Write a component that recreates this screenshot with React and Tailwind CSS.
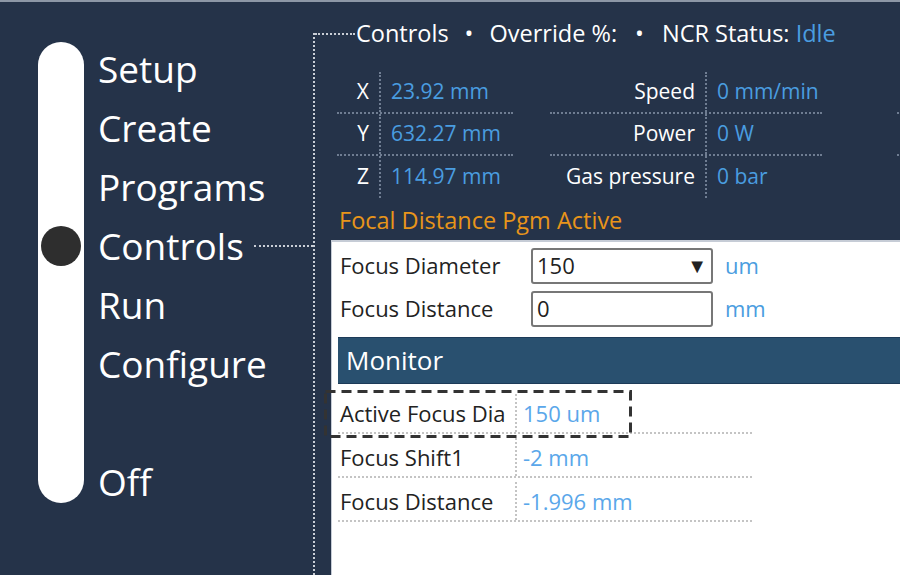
const navItems = ["Setup", "Create", "Programs", "Controls", "Run", "Configure", "", "Off"];

const axisRows = [
  { label: "X", value: "23.92 mm" },
  { label: "Y", value: "632.27 mm" },
  { label: "Z", value: "114.97 mm" },
];

const machineRows = [
  { label: "Speed", value: "0 mm/min" },
  { label: "Power", value: "0 W" },
  { label: "Gas pressure", value: "0 bar" },
];

const monitorRows = [
  { label: "Active Focus Dia", value: "150 um" },
  { label: "Focus Shift1", value: "-2 mm" },
  { label: "Focus Distance", value: "-1.996 mm" },
];

function StatTable({ rows, labelWidth, width }) {
  return (
    <div className="flex flex-col" style={{ width }}>
      {rows.map((row, i) => (
        <div
          key={row.label}
          className={
            "flex h-[42px] items-center " +
            (i < rows.length - 1 ? "border-b-2 border-dotted border-[#6f7d92]" : "")
          }
        >
          <div
            className="flex h-full items-center justify-end border-r-2 border-dotted border-[#6f7d92] pr-[10px] text-white"
            style={{ width: labelWidth }}
          >
            {row.label}
          </div>
          <div className="pl-[10px] text-[#4a9de0]">{row.value}</div>
        </div>
      ))}
    </div>
  );
}

export default function App() {
  return (
    <div
      className="flex h-[575px] w-[900px] overflow-hidden border-t-2 border-[#8d97a6] bg-[#253349]"
      style={{ fontFamily: '"Open Sans", "Noto Sans", sans-serif' }}
    >
      {/* sidebar */}
      <div className="flex w-[313px] shrink-0">
        <div className="ml-[38px] mt-[40px] flex h-[461px] w-[46px] shrink-0 flex-col items-center rounded-full bg-white pt-[184px]">
          <div className="h-[40px] w-[40px] rounded-full bg-[#2e2e2e]" />
        </div>
        <div className="ml-[14px] mt-[37px] flex flex-1 flex-col">
          {navItems.map((item, i) => (
            <div key={i} className="flex h-[59px] items-center">
              <span className="text-[37px] leading-none text-white">{item}</span>
              {item === "Controls" && (
                <div className="ml-[10px] h-0 flex-1 border-t-2 border-dotted border-[#c9ced6]" />
              )}
            </div>
          ))}
        </div>
      </div>

      {/* main */}
      <div className="mt-[31px] flex flex-1 flex-col border-l-2 border-dotted border-[#c9ced6]">
        <div className="-mt-[13px] flex h-[28px] items-center text-[23.5px] text-white">
          <div className="mr-[1px] h-0 w-[40px] border-t-2 border-dotted border-[#c9ced6]" />
          <span>Controls</span>
          <span className="mx-[16px]">•</span>
          <span>Override %:</span>
          <span className="mx-[18px]">•</span>
          <span>
            NCR Status: <span className="text-[#4a9de0]">Idle</span>
          </span>
        </div>

        <div className="ml-[22px] mt-[24px] flex text-[21px]">
          <StatTable rows={axisRows} labelWidth={44} width={176} />
          <div className="ml-[37px]">
            <StatTable rows={machineRows} labelWidth={157} width={272} />
          </div>
          <div className="ml-[75px] flex flex-col">
            <div className="h-[42px] w-[40px] border-b-2 border-dotted border-[#6f7d92]" />
            <div className="h-[42px] w-[40px] border-b-2 border-dotted border-[#6f7d92]" />
          </div>
        </div>

        <div className="ml-[24px] mt-[6px] text-[23.5px] leading-[32px] text-[#e8951a]">
          Focal Distance Pgm Active
        </div>

        <div className="ml-[16px] mt-[4px] flex flex-1 flex-col border-l border-t-2 border-[#c6ccd6] bg-white pl-[6px] pt-[2px] text-[22px] text-[#222]">
          <div className="flex h-[43px] items-center">
            <div className="w-[193px] pl-[2px]">Focus Diameter</div>
            <div className="flex h-[36px] w-[182px] items-center justify-between rounded-[3px] border-2 border-[#777] px-[4px]">
              <span>150</span>
              <span className="text-[20px]">▼</span>
            </div>
            <span className="ml-[12px] text-[#4a9de0]">um</span>
          </div>
          <div className="flex h-[43px] items-center">
            <div className="w-[193px] pl-[2px]">Focus Distance</div>
            <div className="flex h-[36px] w-[182px] items-center rounded-[3px] border-2 border-[#777] px-[4px]">
              <span>0</span>
            </div>
            <span className="ml-[12px] text-[#4a9de0]">mm</span>
          </div>

          <div className="mt-[7px] flex h-[47px] items-center border-y border-[#1d3b58] bg-[#29506f] pl-[8px] text-[26px] text-white">
            Monitor
          </div>

          <div className="relative mt-[6px] w-[414px]">
            {monitorRows.map((row) => (
              <div
                key={row.label}
                className="flex h-[44px] items-center border-b-2 border-dotted border-[#c4c4c4] pt-[4px]"
              >
                <div className="flex h-full w-[179px] items-center border-r-2 border-dotted border-[#c4c4c4] pl-[2px]">
                  {row.label}
                </div>
                <div className="pl-[6px] text-[#5aa7ea]">{row.value}</div>
              </div>
            ))}
            <svg
              className="absolute -left-[14px] top-0"
              width="308"
              height="48"
              viewBox="0 0 308 48"
            >
              <rect
                x="1.5"
                y="1.5"
                width="305"
                height="45"
                fill="none"
                stroke="#333"
                strokeWidth="3"
                strokeDasharray="10 6"
              />
            </svg>
          </div>
        </div>
      </div>
    </div>
  );
}
